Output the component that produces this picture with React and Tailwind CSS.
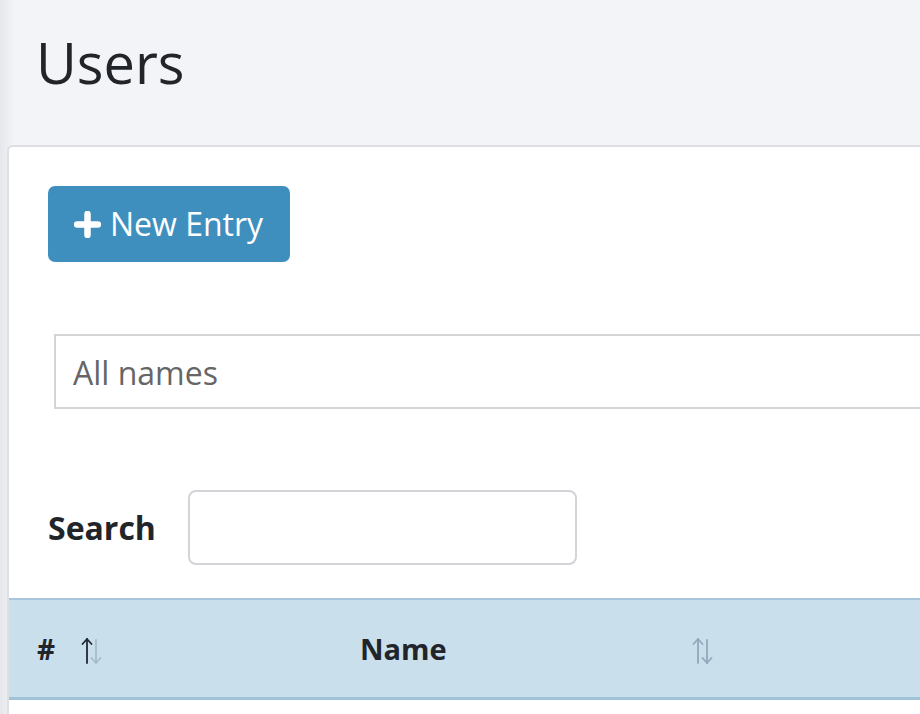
import React from "react";

function SortIcon({ up = "#1f2933", down = "#a9bccb" }) {
  return (
    <svg width="22" height="28" viewBox="0 0 22 28" fill="none" strokeWidth="1.8" strokeLinecap="round" strokeLinejoin="round">
      <g stroke={up}>
        <path d="M6 26V2" />
        <path d="M1.5 7L6 2l4.5 5" />
      </g>
      <g stroke={down}>
        <path d="M15 3v23" />
        <path d="M10.5 21l4.5 5 4.5-5" />
      </g>
    </svg>
  );
}

export default function App() {
  return (
    <div
      className="min-h-[714px] w-[920px] overflow-hidden bg-[linear-gradient(to_right,#e6e7ea,#f3f4f8_14px)] text-[#212529]"
      style={{ fontFamily: '"Open Sans", "Liberation Sans", sans-serif' }}
    >
      <div className="pl-[36px] pt-[34px] pb-[55px]">
        <h1 className="text-[56px] leading-none font-normal">Users</h1>
      </div>

      <div className="ml-[7px] w-[1000px] rounded-tl-[6px] border-l-2 border-t-2 border-[#dedfe2] bg-white min-h-[600px]">
        <div className="pl-[39px] pt-[39px]">
          <button className="flex h-[76px] w-[242px] items-center gap-[9px] rounded-[7px] bg-[#3f8fbe] pl-[26px] text-[32px] text-white">
            <svg width="27" height="27" viewBox="0 0 27 27">
              <path d="M13.5 3v21M3 13.5h21" stroke="white" strokeWidth="6.5" strokeLinecap="round" />
            </svg>
            <span className="leading-none">New Entry</span>
          </button>

          <div className="mt-[72px] ml-[6px] flex h-[75px] items-center border-2 border-[#d3d4d6] pl-[17px] pt-[2px] text-[32px] text-[#666]">
            All names
          </div>

          <div className="mt-[81px] flex items-center">
            <span className="text-[32px] font-bold">Search</span>
            <div className="ml-[32px] h-[75px] w-[389px] rounded-[8px] border-2 border-[#d3d4d8] bg-white" />
          </div>
        </div>

        <div className="mt-[33px] flex h-[102px] items-center border-t-2 border-b-[3px] border-t-[#a7c6dc] border-b-[#a0c3da] bg-[#c9dfeb]">
          <div className="flex w-[112px] items-center pl-[28px]">
            <span className="text-[28px] font-bold">#</span>
            <span className="ml-[26px] mt-[4px]">
              <SortIcon />
            </span>
          </div>
          <div className="flex w-[610px] items-center">
            <span className="flex-1 pl-[239px] text-[29px] font-bold">Name</span>
            <span className="mt-[4px] mr-[17px]">
              <SortIcon up="#92a9bb" down="#92a9bb" />
            </span>
          </div>
        </div>
      </div>
    </div>
  );
}
